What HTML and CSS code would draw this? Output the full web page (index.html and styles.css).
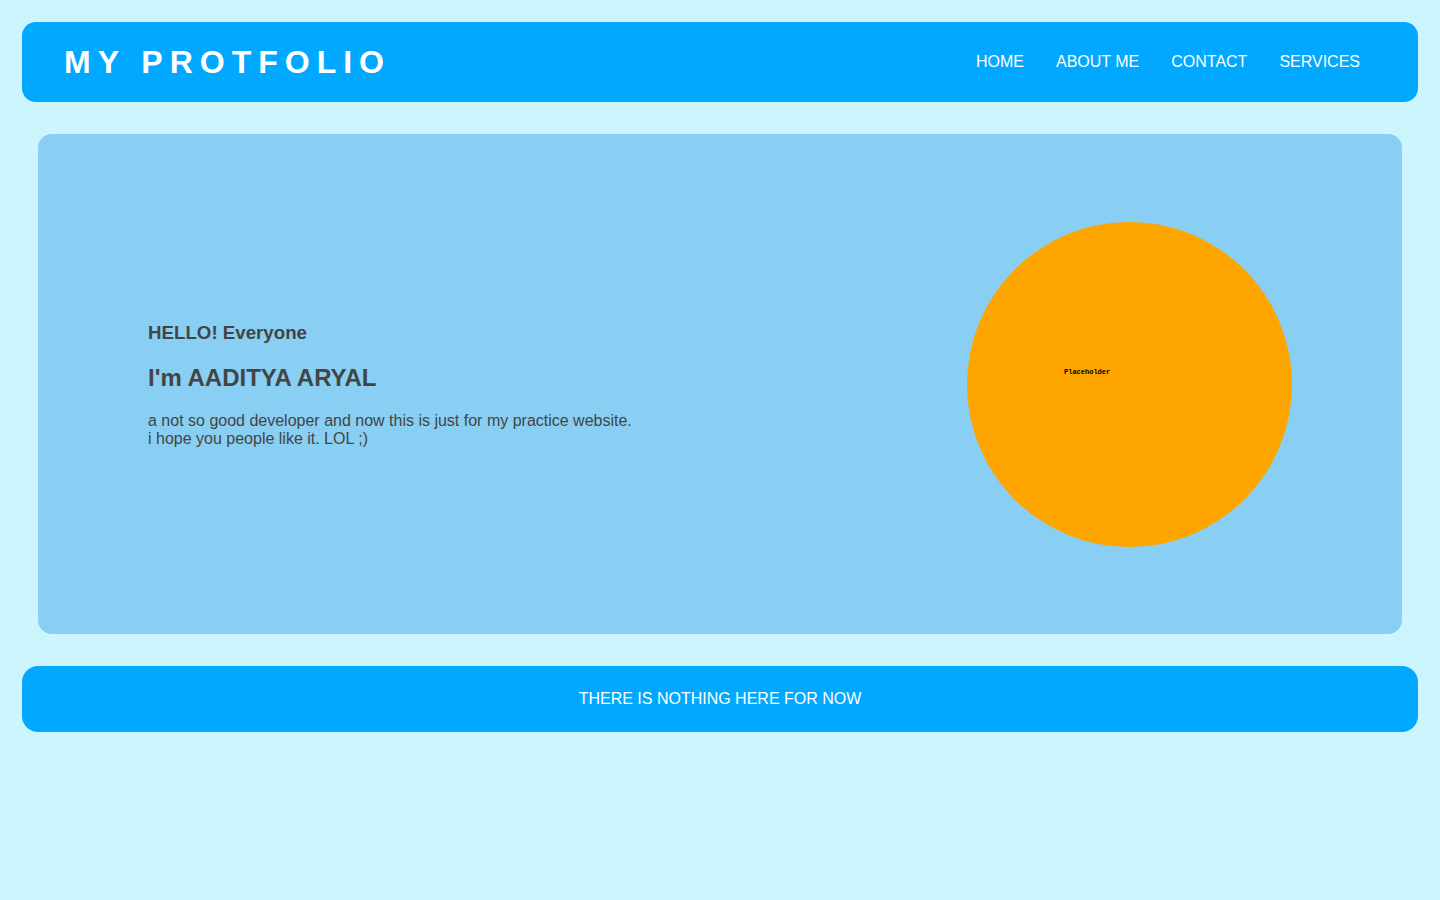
FILE: index.html
```html
<!DOCTYPE html>
<html lang="en">
<head>
<meta charset="utf-8">
<title>My Protfolio</title>
<link rel="stylesheet" href="styles.css">
</head>
<body>
<header class="navbar">
  <h1 class="brand">MY PROTFOLIO</h1>
  <nav class="nav-links">
    <a href="#home">HOME</a>
    <a href="#about">ABOUT ME</a>
    <a href="#contact">CONTACT</a>
    <a href="#services">SERVICES</a>
  </nav>
</header>
<main class="hero">
  <div class="intro">
    <h3>HELLO! Everyone</h3>
    <h2>I'm AADITYA ARYAL</h2>
    <p>a not so good developer and now this is just for my practice website.<br>i hope you people like it. LOL ;)</p>
  </div>
  <div class="portrait"><span class="portrait-label">Placeholder</span></div>
</main>
<footer class="footer">THERE IS NOTHING HERE FOR NOW</footer>
</body>
</html>
```
FILE: styles.css
```css
* {
  box-sizing: border-box;
}

body {
  margin: 22px;
  background: #cdf5fd;
  color: #444;
  font: 16px "Liberation Sans", Arial, sans-serif;
}

.navbar {
  display: flex;
  align-items: center;
  justify-content: space-between;
  height: 80px;
  padding: 0 58px 0 42px;
  border-radius: 14px;
  background: #00a9ff;
  color: #fff;
}

.brand {
  margin: 0;
  font-size: 32px;
  letter-spacing: 7px;
}

.nav-links {
  display: flex;
  gap: 32px;
}

.nav-links a {
  color: #fff;
  text-decoration: none;
}

.hero {
  display: flex;
  align-items: center;
  justify-content: space-between;
  min-height: 500px;
  margin: 32px 16px;
  padding: 0 110px;
  border-radius: 14px;
  background: #89cff3;
}

.portrait {
  width: 325px;
  height: 325px;
  padding: 145px 97px;
  border-radius: 50%;
  background: orange;
}

.portrait-label {
  display: block;
  color: #000;
  font: bold 7px/10px "Liberation Mono", monospace;
}

.footer {
  padding: 24px;
  border-radius: 16px;
  background: #00a9ff;
  color: #fff;
  line-height: 18px;
  text-align: center;
}
```
